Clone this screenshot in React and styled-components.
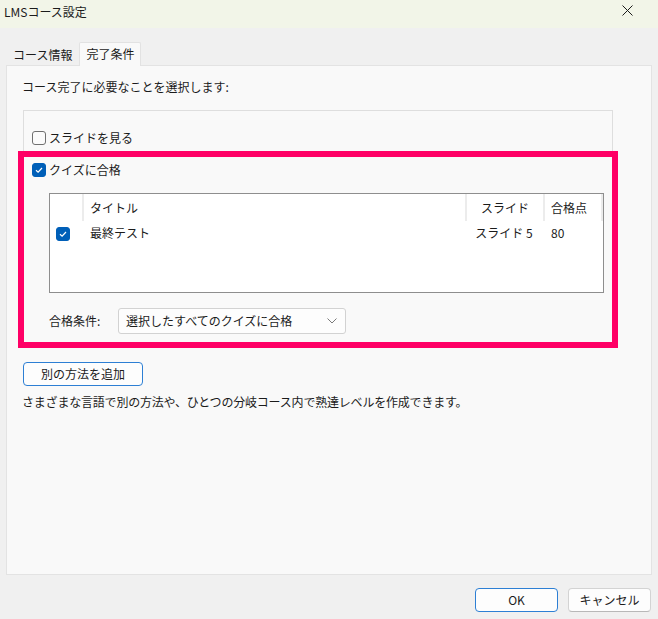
import styled, { createGlobalStyle } from 'styled-components';

const GlobalStyle = createGlobalStyle`
  html, body {
    margin: 0;
    padding: 0;
  }
  body {
    background: #f0f0f0;
    font-family: "Noto Sans CJK JP", "Noto Sans", sans-serif;
    font-size: 12px;
    color: #1b1b1b;
  }
`;

const Window = styled.div`
  width: 658px;
  height: 619px;
  display: flex;
  flex-direction: column;
  overflow: hidden;
  background: #f0f0f0;
`;

const TitleBar = styled.div`
  height: 28px;
  flex: none;
  background: #f2f5e8;
  display: flex;
  align-items: flex-start;
  justify-content: space-between;
  padding: 4px 25px 0 4px;
  box-sizing: border-box;
  line-height: 16px;
`;

const CloseIcon = styled.svg`
  margin-top: 1px;
  display: block;
`;

const TabStrip = styled.div`
  flex: none;
  display: flex;
  align-items: flex-end;
  height: 24px;
  margin-top: 13px;
  padding: 0 6px;
`;

const Tab = styled.div`
  box-sizing: border-box;
  height: ${(p) => (p.$active ? '24px' : '22px')};
  margin-bottom: ${(p) => (p.$active ? '-1px' : '0')};
  padding: 2px 6px 0;
  line-height: 18px;
  border: 1px solid ${(p) => (p.$active ? '#e2e2e2' : 'transparent')};
  border-bottom: none;
  background: ${(p) => (p.$active ? '#f9f9f9' : 'transparent')};
  border-radius: 2px 2px 0 0;
  position: relative;
  z-index: ${(p) => (p.$active ? 1 : 0)};
`;

const Panel = styled.div`
  flex: 1;
  margin: 0 6px;
  border: 1px solid #e3e3e3;
  background: #f9f9f9;
  padding: 13px 38px 0 16px;
  display: flex;
  flex-direction: column;
`;

const Intro = styled.div`
  line-height: 16px;
  margin-left: -1px;
`;

const GroupBox = styled.div`
  margin-top: 15px;
  border: 1px solid #dedede;
  border-bottom: none;
  padding-top: 20px;
`;

const CheckRow = styled.div`
  display: flex;
  align-items: center;
  gap: 3px;
  height: 14px;
  line-height: 16px;
  padding-left: 8px;
`;

const Box = styled.span`
  width: 14px;
  height: 14px;
  box-sizing: border-box;
  border-radius: 3px;
  flex: none;
  display: inline-flex;
  align-items: center;
  justify-content: center;
  border: 1px solid ${(p) => (p.$checked ? '#005fb8' : '#707070')};
  background: ${(p) => (p.$checked ? '#005fb8' : '#fbfbfb')};
`;

const Highlight = styled.div`
  margin: 6px -6px 0;
  border: 6px solid #ff0066;
  padding: 6px 8px 8px 0;
  background: #f9f9f9;
`;

const Table = styled.div`
  margin: 16px 0 0 25px;
  height: 100px;
  box-sizing: border-box;
  border: 1px solid #8e8e8e;
  background: #fff;
  display: grid;
  grid-template-columns: 32px 383px 78px 1fr;
  grid-template-rows: 27px 24px;
  align-content: start;
`;

const HeadCell = styled.div`
  border-left: ${(p) => (p.$first ? 'none' : '2px solid #ececec')};
  border-right: ${(p) => (p.$last ? '2px solid #ececec' : 'none')};
  display: flex;
  align-items: center;
  justify-content: ${(p) => p.$align || 'flex-start'};
  padding: 1px ${(p) => (p.$align === 'center' ? '0' : '6px')} 0;
  line-height: 16px;
`;

const Cell = styled.div`
  display: flex;
  align-items: center;
  justify-content: ${(p) => p.$align || 'flex-start'};
  padding: 0 ${(p) => (p.$align === 'center' ? '0' : '8px')};
  line-height: 16px;
`;

const BoxCell = styled.div`
  display: flex;
  align-items: center;
  padding: 1px 0 0 6px;
`;

const ComboRow = styled.div`
  display: flex;
  align-items: center;
  margin: 15px 0 0 25px;
  height: 26px;
`;

const ComboLabel = styled.div`
  width: 69px;
  line-height: 16px;
`;

const Combo = styled.div`
  width: 228px;
  height: 26px;
  box-sizing: border-box;
  border: 1px solid #d2d2d2;
  border-radius: 3px;
  background: #fdfdfd;
  display: flex;
  align-items: center;
  justify-content: space-between;
  padding: 0 8px 0 7px;
  line-height: 16px;
`;

const Button = styled.div`
  box-sizing: border-box;
  width: ${(p) => p.$width};
  height: 24px;
  border: 1px solid ${(p) => (p.$accent ? '#2d7fd4' : '#d3d3d3')};
  border-bottom-color: ${(p) => (p.$accent ? '#2d7fd4' : '#b8b8b8')};
  border-radius: 4px;
  background: #fdfdfd;
  display: flex;
  align-items: center;
  justify-content: center;
  line-height: 16px;
`;

const AddButton = styled(Button)`
  margin-top: 14px;
`;

const Note = styled.div`
  margin-top: 8px;
  margin-left: -1px;
  line-height: 16px;
  letter-spacing: -0.2px;
`;

const Footer = styled.div`
  flex: none;
  display: flex;
  justify-content: flex-end;
  gap: 10px;
  padding: 13px 7px 7px;
`;

const Check = () => (
  <svg width="10" height="10" viewBox="0 0 10 10">
    <path d="M2 5.2 L4.1 7.2 L8 3" fill="none" stroke="#fff" strokeWidth="1.2" />
  </svg>
);

const Chevron = () => (
  <svg width="10" height="6" viewBox="0 0 10 6">
    <path d="M0.5 0.5 L5 5 L9.5 0.5" fill="none" stroke="#7a7a7a" strokeWidth="1" />
  </svg>
);

const App = () => {
  return (
    <>
      <GlobalStyle />
      <Window>
        <TitleBar>
          <span>LMSコース設定</span>
          <CloseIcon width="11" height="11" viewBox="0 0 11 11">
            <path d="M0.5 0.5 L10.5 10.5 M10.5 0.5 L0.5 10.5" stroke="#1b1b1b" strokeWidth="1" />
          </CloseIcon>
        </TitleBar>
        <TabStrip>
          <Tab>コース情報</Tab>
          <Tab $active>完了条件</Tab>
        </TabStrip>
        <Panel>
          <Intro>コース完了に必要なことを選択します:</Intro>
          <GroupBox>
            <CheckRow>
              <Box />
              <span>スライドを見る</span>
            </CheckRow>
            <Highlight>
              <CheckRow>
                <Box $checked>
                  <Check />
                </Box>
                <span>クイズに合格</span>
              </CheckRow>
              <Table>
                <HeadCell $first />
                <HeadCell>タイトル</HeadCell>
                <HeadCell $align="center">スライド</HeadCell>
                <HeadCell $last>合格点</HeadCell>
                <BoxCell>
                  <Box $checked>
                    <Check />
                  </Box>
                </BoxCell>
                <Cell>最終テスト</Cell>
                <Cell $align="center">スライド 5</Cell>
                <Cell>80</Cell>
              </Table>
              <ComboRow>
                <ComboLabel>合格条件:</ComboLabel>
                <Combo>
                  <span>選択したすべてのクイズに合格</span>
                  <Chevron />
                </Combo>
              </ComboRow>
            </Highlight>
          </GroupBox>
          <AddButton $accent $width="120px">別の方法を追加</AddButton>
          <Note>さまざまな言語で別の方法や、ひとつの分岐コース内で熟達レベルを作成できます。</Note>
        </Panel>
        <Footer>
          <Button $accent $width="83px">OK</Button>
          <Button $width="83px">キャンセル</Button>
        </Footer>
      </Window>
    </>
  );
};

export default App;
